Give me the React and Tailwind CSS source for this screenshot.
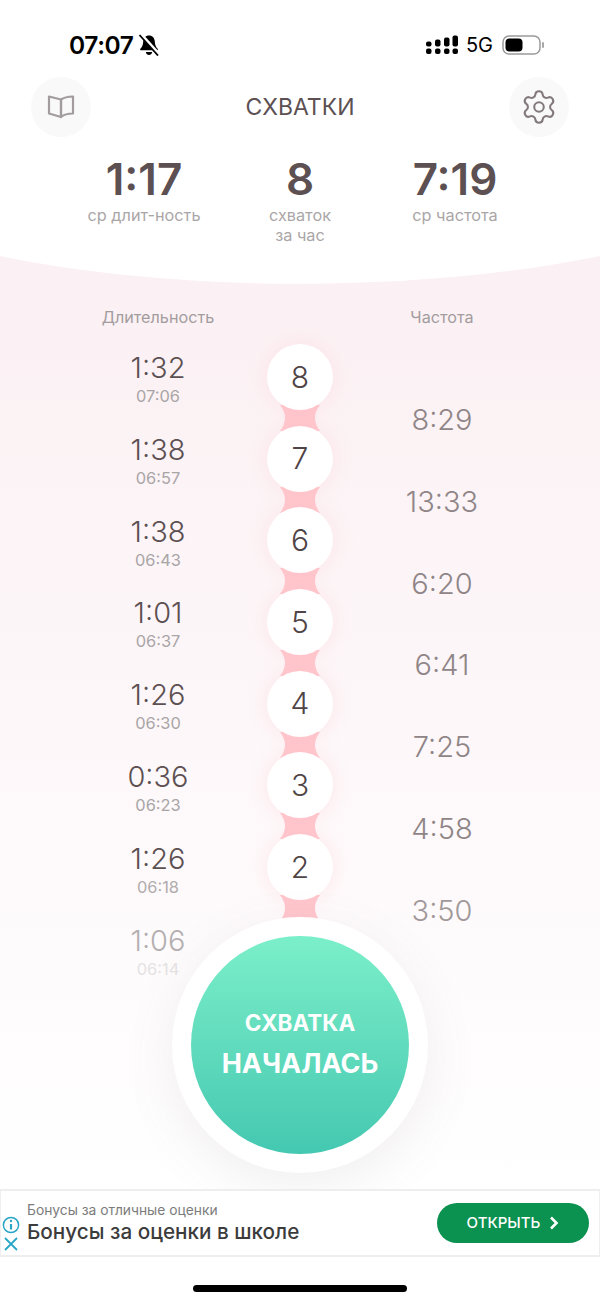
import React from "react";
import { Settings } from "lucide-react";

const font = { fontFamily: "Inter, 'Noto Sans', sans-serif" };

const left = [
  ["1:32", "07:06", "text-[#5c5052]", "text-[#a9a5a6]"],
  ["1:38", "06:57", "text-[#5c5052]", "text-[#a9a5a6]"],
  ["1:38", "06:43", "text-[#5c5052]", "text-[#a9a5a6]"],
  ["1:01", "06:37", "text-[#5c5052]", "text-[#a9a5a6]"],
  ["1:26", "06:30", "text-[#5c5052]", "text-[#a9a5a6]"],
  ["0:36", "06:23", "text-[#5c5052]", "text-[#a9a5a6]"],
  ["1:26", "06:18", "text-[#5c5052]", "text-[#b0acad]"],
  ["1:06", "06:14", "text-[#b3afb0]", "text-[#e4e2e3]"],
];
const right = [
  ["8:29", "text-[#8f8587]"],
  ["13:33", "text-[#8f8587]"],
  ["6:20", "text-[#8f8587]"],
  ["6:41", "text-[#8f8587]"],
  ["7:25", "text-[#8f8587]"],
  ["4:58", "text-[#8f8587]"],
  ["3:50", "text-[#a09899]"],
];
const nums = [8, 7, 6, 5, 4, 3, 2];

function Signal() {
  return (
    <svg width="32" height="20" viewBox="0 0 32 20">
      {[0, 9, 18, 26.5].map((x, i) => (
        <g key={x} fill="#000">
          <rect x={x} y="13.500" width="5.500" height="5.500" rx="2" />
          <rect x={x} y={i === 0 ? 6.500 : i === 1 ? 4.500 : i === 2 ? 2.500 : 0.500} width="5.500" height={i === 0 ? 5 : i === 1 ? 7 : i === 2 ? 9 : 11} rx="2" />
        </g>
      ))}
    </svg>
  );
}

function Battery() {
  return (
    <svg width="44" height="22" viewBox="0 0 44 22">
      <rect x="1" y="2" width="37" height="18" rx="6" fill="none" stroke="#9a9a9a" strokeWidth="1.500" />
      <rect x="3.500" y="4.500" width="17" height="13" rx="4" fill="#000" />
      <rect x="40" y="8" width="2" height="6" rx="1" fill="#a8a8a8" />
    </svg>
  );
}

function BellOff() {
  return (
    <svg width="22" height="22" viewBox="0 0 22 22">
      <path d="M11 1.500c-3.600 0-5.600 2.600-5.800 6-.2 3.200-.8 5.200-2.800 7.200-.6.700-.2 1.600.8 1.600h15.600c1 0 1.400-.9.800-1.600-2-2-2.600-4-2.800-7.200-.2-3.400-2.200-6-5.800-6z" fill="#000" />
      <path d="M7.800 18h6.400c-.3 1.800-1.600 3-3.200 3s-2.900-1.200-3.200-3z" fill="#000" />
      <path d="M2.500 0 21 20.500" stroke="#fff" strokeWidth="3.500" />
      <path d="M1.500 1 20 21.500" stroke="#000" strokeWidth="1.800" />
    </svg>
  );
}

function Book() {
  return (
    <svg width="28" height="26" viewBox="0 0 28 26" fill="none" stroke="#a39c9e" strokeWidth="2.200" strokeLinejoin="round">
      <path d="M14 5.500 2 2.500v17l12 3.500z" />
      <path d="M14 5.500c2.500-1.800 6.500-2.800 12-3v17c-4.500 0-9 1-12 3.500z" />
    </svg>
  );
}

function Connector() {
  return (
    <svg className="block" width="40" height="82" viewBox="0 0 40 82">
      <path d="M0 28Q10 41 0 54H40Q30 41 40 28z" fill="#ffc7cd" />
    </svg>
  );
}

function Info() {
  return (
    <svg width="18" height="18" viewBox="0 0 18 18" fill="none" stroke="#2aa6c6">
      <circle cx="9" cy="9" r="7.600" strokeWidth="1.500" />
      <path d="M9 8v5.500" strokeWidth="2.200" />
      <circle cx="9" cy="5" r="1.200" fill="#2aa6c6" stroke="none" />
    </svg>
  );
}

export default function App() {
  return (
    <div className="relative w-[600px] h-[1303px] overflow-hidden bg-white flex flex-col" style={font}>
      <header className="h-[256px] shrink-0 bg-white flex flex-col">
        <div className="flex items-center justify-between pl-[69px] pr-[54px] pt-[28px] h-[62px]">
          <div className="flex items-center gap-[4px]">
            <span className="text-[24.500px] leading-[34px] font-semibold tracking-[-0.4px] text-black">07:07</span>
            <BellOff />
          </div>
          <div className="flex items-center gap-[9px]">
            <Signal />
            <span className="text-[20px] leading-[24px] font-normal text-black -ml-[1px]">5G</span>
            <Battery />
          </div>
        </div>
        <div className="flex items-center justify-between px-[31px] mt-[15px]">
          <div className="w-[60px] h-[60px] rounded-full bg-[#f9f9fa] flex items-center justify-center">
            <Book />
          </div>
          <span className="text-[23px] leading-[30px] text-[#5c5052]">СХВАТКИ</span>
          <div className="w-[60px] h-[60px] rounded-full bg-[#f9f9fa] flex items-center justify-center">
            <Settings size={38} strokeWidth={1.300} color="#83797b" />
          </div>
        </div>
        <div className="relative mt-[15px] h-[100px]">
          <div className="absolute left-[44px] w-[200px] top-0 flex flex-col items-center">
            <span className="text-[44px] leading-[54px] font-semibold text-[#5c5052]">1:17</span>
            <span className="text-[16.300px] leading-[20px] -mt-[1px] text-[#aaa6a7]">ср длит-ность</span>
          </div>
          <div className="absolute left-[200px] w-[200px] top-0 flex flex-col items-center">
            <span className="text-[44px] leading-[54px] font-semibold text-[#5c5052]">8</span>
            <span className="text-[16.300px] leading-[20px] -mt-[1px] text-[#aaa6a7] text-center">схваток<br />за час</span>
          </div>
          <div className="absolute left-[355px] w-[200px] top-0 flex flex-col items-center">
            <span className="text-[44px] leading-[54px] font-semibold text-[#5c5052]">7:19</span>
            <span className="text-[16.300px] leading-[20px] -mt-[1px] text-[#aaa6a7]">ср частота</span>
          </div>
        </div>
      </header>

      <main className="relative h-[933px] shrink-0 bg-gradient-to-b from-[#fbf0f3] via-[#fdf7f9] to-white">
        <svg className="absolute left-0 top-0 block" width="600" height="29" viewBox="0 0 600 29">
          <path d="M0 0C180 37 420 37 600 0V-1H0z" fill="#fff" />
        </svg>
        <div className="flex pt-[50px]">
          <div className="w-[316px] pl-[58px] pr-[42px] flex-col flex">
            <div className="text-center text-[16.200px] leading-[22px] text-[#a39c9e] h-[43px] w-[200px]">Длительность</div>
            {left.map(([a, b, c, d]) => (
              <div key={b} className="h-[81.800px] w-[200px] flex flex-col items-center pt-[1px]">
                <span className={`text-[29px] leading-[36px] font-[350] ${c}`}>{a}</span>
                <span className={`text-[16.400px] leading-[20px] ${d}`}>{b}</span>
              </div>
            ))}
          </div>
          <div className="flex-1 pl-[26px] flex-col flex">
            <div className="text-center text-[16.200px] leading-[22px] text-[#a39c9e] h-[96px] w-[200px]">Частота</div>
            {right.map(([a, c]) => (
              <div key={a} className={`h-[81.800px] w-[200px] text-center text-[29px] leading-[36px] font-[350] ${c}`}>{a}</div>
            ))}
          </div>
        </div>
        <div className="absolute left-[267px] top-[88px] w-[66px] flex flex-col items-center">
          {nums.map((n) => (
            <div key={n} className="relative w-[66px] h-[81.700px] flex justify-center">
              <div className="absolute left-[13px] top-[33px]"><Connector /></div>
              <div className="absolute top-0 left-0 w-[66px] h-[66px] rounded-full bg-white shadow-[0_0_20px_rgba(255,190,200,0.3)] flex items-center justify-center z-10 text-[30px] font-[350] text-[#4f4446]">
                {n}
              </div>
            </div>
          ))}
        </div>
        <div className="absolute left-[172px] top-[661px] w-[256px] h-[256px] rounded-full bg-white shadow-[0_14px_50px_rgba(120,110,115,0.1)] flex items-center justify-center z-20">
          <div className="w-[218px] h-[218px] rounded-full bg-gradient-to-b from-[#7befc9] to-[#44c8b1] flex flex-col items-center justify-center text-white font-bold pt-[4px]">
            <span className="text-[22.500px] leading-[30px] -mt-[6px]">СХВАТКА</span>
            <span className="text-[27px] leading-[34px] mt-[9px]">НАЧАЛАСЬ</span>
          </div>
        </div>
      </main>

      <div className="absolute left-0 top-[1189px] w-[600px] h-[68px] bg-white border-y-2 border-x border-[#eeeeee] z-30 flex items-center">
        <div className="w-[24px] flex flex-col items-center pr-[5px] self-stretch pt-[25px] gap-[3px] shrink-0">
          <Info />
          <svg width="14" height="14" viewBox="0 0 14 14" stroke="#2aa6c6" strokeWidth="1.800"><path d="M1 1 13 13M13 1 1 13" /></svg>
        </div>
        <div className="pl-[2px] flex flex-col flex-1">
          <span className="text-[13.800px] leading-[18px] text-[#7c7c7c]">Бонусы за отличные оценки</span>
          <span className="text-[20.700px] leading-[26px] font-medium text-[#3c3c3c]">Бонусы за оценки в школе</span>
        </div>
        <div className="mr-[10px] w-[152px] h-[40px] rounded-full bg-[#0b9150] flex items-center justify-center gap-[9px] text-white text-[15px] font-medium">
          <span>ОТКРЫТЬ</span>
          <svg width="10" height="14" viewBox="0 0 10 14" fill="none" stroke="#fff" strokeWidth="2.600"><path d="M2 1.500 7.500 7 2 12.500" /></svg>
        </div>
      </div>

      <div className="absolute left-[193px] top-[1285px] w-[214px] h-[7px] rounded-full bg-black z-30" />
    </div>
  );
}
